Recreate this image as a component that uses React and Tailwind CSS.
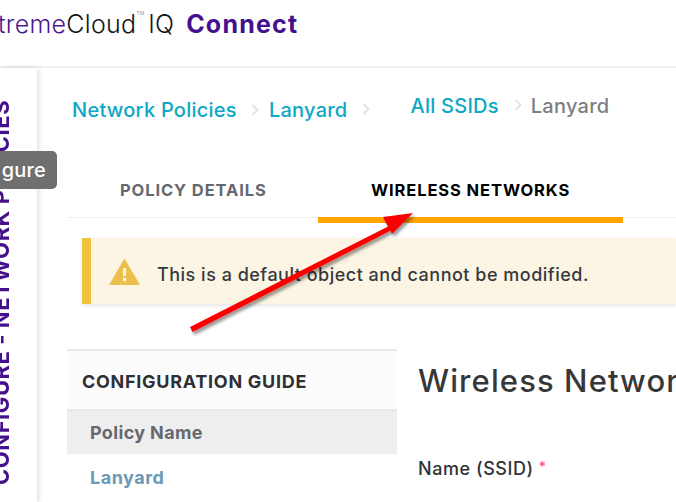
const font = { fontFamily: '"Inter", "Liberation Sans", sans-serif' };

function Chevron({ className = "" }) {
  return (
    <svg width="8" height="12" viewBox="0 0 8 12" className={className} fill="none">
      <path d="M1.5 1 L6.5 6 L1.5 11" stroke="#e4e4e4" strokeWidth="2" />
    </svg>
  );
}

function Arrow() {
  return (
    <svg className="absolute left-0 top-0 pointer-events-none" width="676" height="502" viewBox="0 0 676 502" fill="none">
      <defs>
        <filter id="arrowShadow" x="-20%" y="-20%" width="140%" height="140%">
          <feDropShadow dx="2" dy="3" stdDeviation="1.5" floodColor="#000" floodOpacity="0.4" />
        </filter>
      </defs>
      <g filter="url(#arrowShadow)">
        <path d="M190 327 L390 225.5 L392 230 L192.5 332 Z" fill="#fb0000" />
        <path d="M413 213 L383 217 L392 234 Z" fill="#fb0000" />
      </g>
    </svg>
  );
}

export default function App() {
  return (
    <div className="relative w-[676px] h-[502px] overflow-hidden bg-white" style={font}>
      <header className="h-[68px] border-b-2 border-[#f0f0f0] flex items-center pb-[16px] whitespace-nowrap">
        <span className="text-[25px] font-light text-[#4b1a8f] tracking-[0.3px] -ml-[2px]">treme</span>
        <span className="text-[25px] font-light text-[#161616] tracking-[0.3px]">Cloud</span>
        <span className="text-[5px] text-[#999] self-start mt-[10px]">TM</span>
        <span className="text-[25px] font-light text-[#161616] ml-[4px] tracking-[0.2px]">IQ</span>
        <span className="text-[25px] font-bold text-[#44108c] ml-[12px] tracking-[1.2px]">Connect</span>
      </header>

      <div className="flex h-[434px]">
        <aside className="w-[37px] shrink-0 relative shadow-[2px_0_5px_rgba(0,0,0,0.12)] overflow-hidden">
          <div
            className="absolute left-[-8px] top-[28px] h-[392px] flex items-center justify-center text-[22px] font-bold text-[#44108c] whitespace-nowrap leading-[19px] tracking-[0.55px] rotate-180"
            style={{ writingMode: "vertical-rl" }}
          >
            CONFIGURE - NETWORK POLICIES
          </div>
        </aside>

        <main className="flex-1 min-w-0 pl-[30px] overflow-hidden">
          <nav className="h-[56px] pl-[5px] flex items-start text-[20px] font-medium whitespace-nowrap tracking-[0.25px]">
            <span className="text-[#0da8c5] mt-[28px] leading-[28px]">Network Policies</span>
            <Chevron className="ml-[14px] mt-[36px]" />
            <span className="text-[#0da8c5] ml-[10px] mt-[28px] leading-[28px]">Lanyard</span>
            <Chevron className="ml-[15px] mt-[35px]" />
            <span className="text-[#0da8c5] ml-[40px] mt-[24px] leading-[28px]">All SSIDs</span>
            <Chevron className="ml-[15px] mt-[31px]" />
            <span className="text-[#7d7d84] ml-[9px] mt-[24px] leading-[28px]">Lanyard</span>
          </nav>

          <div className="h-[94px] border-b border-[#f0f0f0] relative whitespace-nowrap text-[16.5px] font-bold tracking-[0.9px]">
            <span className="absolute left-[53px] top-[56px] leading-[20px] text-[#666870]">POLICY DETAILS</span>
            <div className="absolute left-[251px] top-0 w-[305px] h-[93px] border-b-[6px] border-[#ffa400] box-content">
              <span className="absolute left-[53px] top-[56px] leading-[20px] text-black">WIRELESS NETWORKS</span>
            </div>
          </div>

          <div className="mt-[20px] ml-[15px] h-[66px] bg-[#fcf5e3] border-l-[9px] border-[#f0c33c] shadow-[0_2px_4px_rgba(0,0,0,0.1)] flex items-center whitespace-nowrap">
            <svg width="33" height="29" viewBox="0 0 34 29" className="ml-[17px] shrink-0">
              <path d="M17 1 L33 28.5 L1 28.5 Z" fill="#ecc04c" />
              <rect x="15.4" y="11" width="3.2" height="8" fill="#fcf5e3" />
              <rect x="15.4" y="21" width="3.2" height="3.4" fill="#fcf5e3" />
            </svg>
            <span className="ml-[16px] mt-[7px] text-[18px] leading-[24px] font-medium text-[#37393f] tracking-[0.5px]">This is a default object and cannot be modified.</span>
          </div>

          <div className="flex mt-[45px] whitespace-nowrap">
            <section className="w-[330px] shrink-0">
              <div className="h-[62px] bg-[#fcfcfc] border-y-2 border-[#e8e8e8] flex items-center pl-[15px] pt-[2px] text-[18px] font-bold text-[#2f3035] tracking-[0.72px]">
                CONFIGURATION GUIDE
              </div>
              <div className="h-[43px] bg-[#eeeeee] flex items-center pl-[23px] text-[18px] font-bold text-[#67686e] tracking-[0.35px]">
                Policy Name
              </div>
              <div className="h-[46px] flex items-center pl-[23px] text-[18px] font-bold text-[#6b9ab8] tracking-[0.5px]">
                Lanyard
              </div>
            </section>
            <section className="pl-[21px] min-w-0">
              <h1 className="mt-[10px] text-[31px] leading-[44px] font-medium text-[#37373a] tracking-[1.1px]">Wireless Networks</h1>
              <div className="mt-[54px] text-[18px] leading-[24px] font-medium text-[#2f3238] tracking-[0.55px] flex items-start">
                Name (SSID)
                <span className="text-[#ff5a7a] text-[14px] ml-[5px] leading-[20px]">*</span>
              </div>
            </section>
          </div>
        </main>
      </div>

      <div className="absolute left-[-20px] top-[151px] w-[77px] h-[38px] rounded-[5px] bg-[#6f6f6f] flex items-center justify-end pr-[11px] text-[20px] font-medium text-white tracking-[0.2px]">
        gure
      </div>

      <Arrow />
    </div>
  );
}
